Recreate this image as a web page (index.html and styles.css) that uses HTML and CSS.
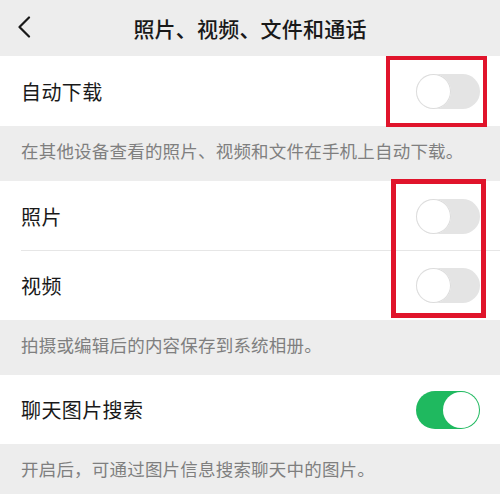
FILE: index.html
```html
<!DOCTYPE html>
<html lang="zh-CN">
<head>
<meta charset="utf-8">
<link rel="stylesheet" href="styles.css">
</head>
<body>
<div class="page">
  <header class="topbar">
    <svg class="back" width="14" height="22" viewBox="0 0 14 22"><path d="M12 1.5 L2.5 11 L12 20.5" fill="none" stroke="#191919" stroke-width="2.2" stroke-linecap="round" stroke-linejoin="round"/></svg>
    <div class="title">照片、视频、文件和通话</div>
  </header>

  <section class="group">
    <div class="row row-first"><span class="label">自动下载</span><span class="switch"></span></div>
  </section>
  <div class="note n1">在其他设备查看的照片、视频和文件在手机上自动下载。</div>

  <section class="group">
    <div class="row row-a"><span class="label">照片</span><span class="switch"></span></div>
    <div class="divider"></div>
    <div class="row row-b"><span class="label">视频</span><span class="switch"></span></div>
  </section>
  <div class="note n2">拍摄或编辑后的内容保存到系统相册。</div>

  <section class="group">
    <div class="row row-b"><span class="label">聊天图片搜索</span><span class="switch on"></span></div>
  </section>
  <div class="note n3">开启后，可通过图片信息搜索聊天中的图片。</div>

  <div class="mark mark1"></div>
  <div class="mark mark2"></div>
</div>
</body>
</html>
```

FILE: styles.css
```css
* { box-sizing: border-box; margin: 0; padding: 0; }
html, body { width: 500px; height: 494px; overflow: hidden; }
body {
  background: #ededed;
  font-family: "Noto Sans CJK SC", "Noto Sans", sans-serif;
  color: #191919;
}
.page { position: relative; width: 500px; height: 494px; }
.topbar {
  height: 56px;
  position: relative;
  display: flex;
  align-items: center;
  justify-content: center;
}
.back { position: absolute; left: 17px; top: 16px; }
.title { font-size: 21px; font-weight: 500; letter-spacing: 0.2px; }
.group { background: #fff; }
.row {
  display: flex;
  align-items: center;
  justify-content: space-between;
  padding: 0 20px 0 21px;
}
.row-first { height: 70px; }
.row-a { height: 70px; }
.row-b { height: 69px; }
.label { font-size: 20px; letter-spacing: 0.4px; }
.divider { height: 1px; margin-left: 21px; background: #e6e6e6; margin-top: -1px; position: relative; }
.note {
  font-size: 17.5px;
  color: #7f7f7f;
  padding: 12px 0 0 21px;
  letter-spacing: 0.2px;
}
.n1, .n2 { height: 55px; }
.n3 { height: 50px; }
.switch {
  width: 64px;
  height: 35px;
  border-radius: 18px;
  background: #e4e4e4;
  position: relative;
}
.switch::after {
  content: "";
  position: absolute;
  left: 0;
  top: 0;
  width: 35px;
  height: 35px;
  border-radius: 50%;
  background: #fff;
  box-shadow: 0 0 0 1px #dcdcdc inset;
}
.switch.on { background: #1fb95f; height: 38px; border-radius: 19px; }
.switch.on::after {
  left: auto;
  right: 1px;
  top: 1px;
  width: 36px;
  height: 36px;
  box-shadow: none;
}
.mark { position: absolute; border-style: solid; border-color: #e0142b; }
.mark1 { left: 386px; top: 56px; width: 101px; height: 71px; border-width: 4px; }
.mark2 { left: 391px; top: 179px; width: 95px; height: 139px; border-width: 5px; }
```
